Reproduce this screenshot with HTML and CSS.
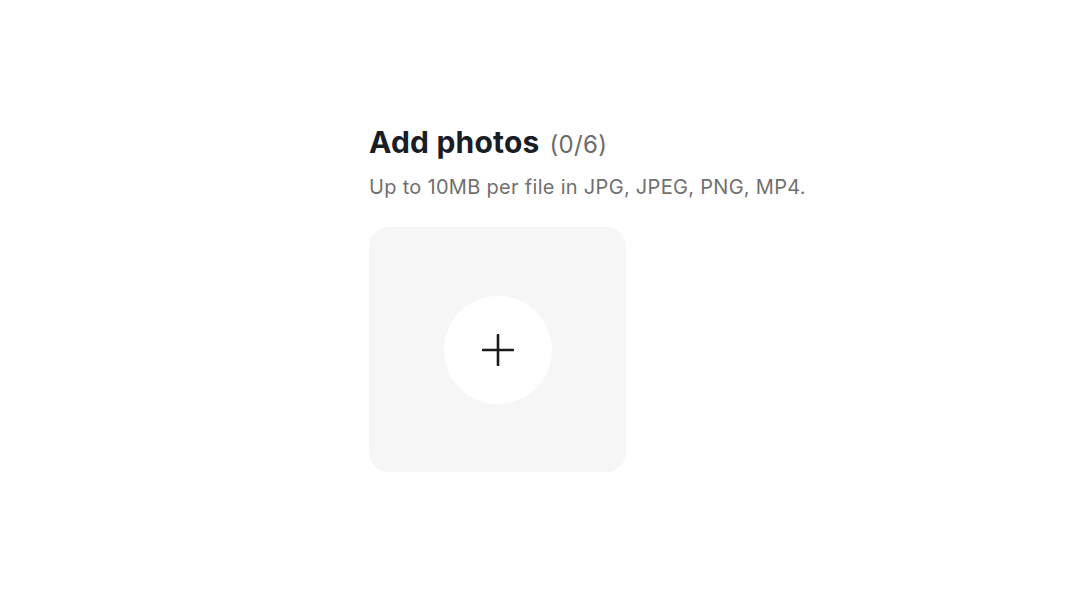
FILE: index.html
```html
<!DOCTYPE html>
<html lang="en">
<head>
    <meta charset="UTF-8">
    <meta name="viewport" content="width=device-width, initial-scale=1.0">
    <title>Add photos</title>
    <link rel="stylesheet" href="styles.css">
</head>
<body>

<div class="upload-section">
    <div class="upload-header">
        <h2 class="upload-title">Add photos</h2>
        <span class="upload-count">(0/6)</span>
    </div>
    <p class="upload-hint">Up to 10MB per file in JPG, JPEG, PNG, MP4.</p>

    <div class="upload-grid">
        <button class="upload-tile" type="button" aria-label="Add photo">
            <span class="upload-circle">
                <svg width="32" height="32" viewBox="0 0 32 32" fill="none">
                    <path d="M16 1V31M1 16H31" stroke="#1b1b1b" stroke-width="2.6" stroke-linecap="round"/>
                </svg>
            </span>
        </button>
    </div>
</div>

</body>
</html>
```

FILE: styles.css
```css
/* Genel */
body {
    font-family: 'Inter', 'Noto Sans', sans-serif;
    background: #fff;
    margin: 0;
}

.upload-section {
    padding: 124px 0 0 369px;
}

/* Başlık */
.upload-header {
    display: flex;
    align-items: baseline;
    gap: 10px;
}

.upload-title {
    font-size: 30px;
    font-weight: 700;
    color: #1a1d24;
    margin: 0;
    letter-spacing: 0.2px;
}

.upload-count {
    font-size: 24px;
    color: #6b6b6b;
    letter-spacing: 0.3px;
}

.upload-hint {
    font-size: 20px;
    color: #707070;
    margin: 15px 0 0;
    letter-spacing: 0.3px;
}

/* Yükleme kutusu */
.upload-grid {
    margin-top: 28px;
    display: flex;
}

.upload-tile {
    width: 257px;
    height: 245px;
    background: #f6f6f6;
    border: none;
    border-radius: 20px;
    display: flex;
    justify-content: center;
    align-items: center;
    padding: 0;
    cursor: pointer;
}

.upload-circle {
    width: 108px;
    height: 108px;
    border-radius: 50%;
    background: #fff;
    display: flex;
    justify-content: center;
    align-items: center;
}
```
